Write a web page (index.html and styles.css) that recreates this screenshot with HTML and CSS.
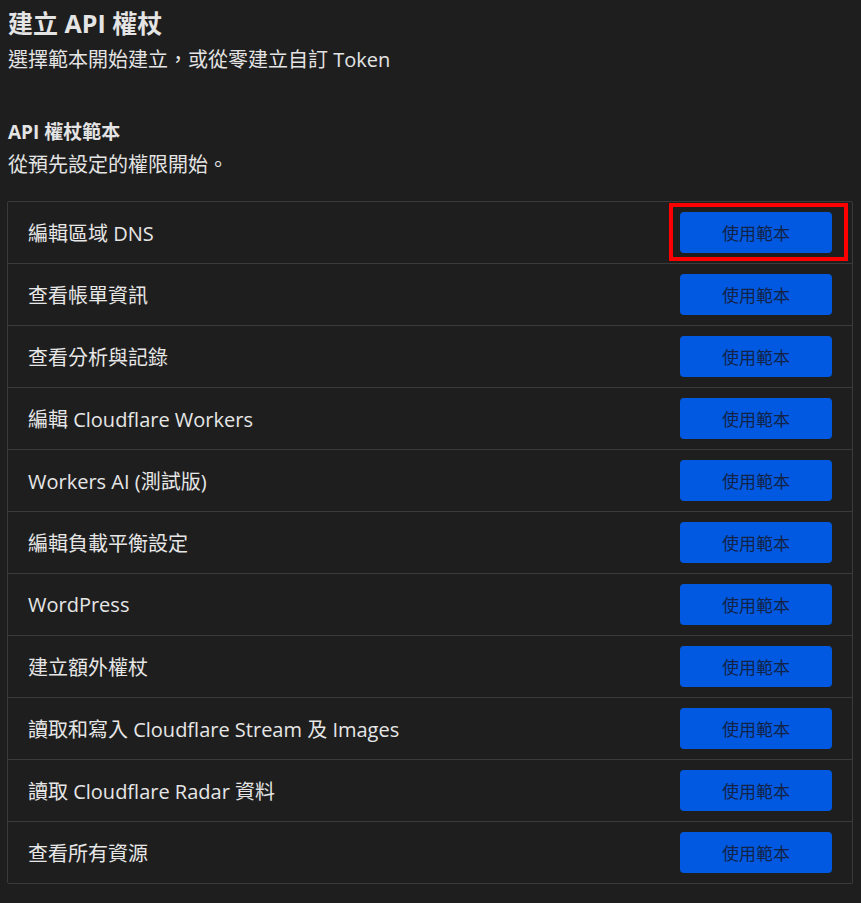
FILE: index.html
```html
<!DOCTYPE html>
<html lang="zh-Hant">
<head>
    <meta charset="UTF-8">
    <meta name="viewport" content="width=device-width, initial-scale=1.0">
    <title>建立 API 權杖</title>
    <link rel="stylesheet" href="styles.css">
</head>
<body>

<div class="page">
    <div class="page-header">
        <h1>建立 API 權杖</h1>
        <p>選擇範本開始建立，或從零建立自訂 Token</p>
    </div>

    <div class="section-header">
        <h2>API 權杖範本</h2>
        <p>從預先設定的權限開始。</p>
    </div>

    <div class="template-list">
        <div class="template-row">
            <span class="template-name">編輯區域 DNS</span>
            <span class="button-wrap highlighted">
                <button class="use-btn">使用範本</button>
            </span>
        </div>
        <div class="template-row">
            <span class="template-name">查看帳單資訊</span>
            <span class="button-wrap"><button class="use-btn">使用範本</button></span>
        </div>
        <div class="template-row">
            <span class="template-name">查看分析與記錄</span>
            <span class="button-wrap"><button class="use-btn">使用範本</button></span>
        </div>
        <div class="template-row">
            <span class="template-name">編輯 Cloudflare Workers</span>
            <span class="button-wrap"><button class="use-btn">使用範本</button></span>
        </div>
        <div class="template-row">
            <span class="template-name">Workers AI (測試版)</span>
            <span class="button-wrap"><button class="use-btn">使用範本</button></span>
        </div>
        <div class="template-row">
            <span class="template-name">編輯負載平衡設定</span>
            <span class="button-wrap"><button class="use-btn">使用範本</button></span>
        </div>
        <div class="template-row">
            <span class="template-name">WordPress</span>
            <span class="button-wrap"><button class="use-btn">使用範本</button></span>
        </div>
        <div class="template-row">
            <span class="template-name">建立額外權杖</span>
            <span class="button-wrap"><button class="use-btn">使用範本</button></span>
        </div>
        <div class="template-row">
            <span class="template-name">讀取和寫入 Cloudflare Stream 及 Images</span>
            <span class="button-wrap"><button class="use-btn">使用範本</button></span>
        </div>
        <div class="template-row">
            <span class="template-name">讀取 Cloudflare Radar 資料</span>
            <span class="button-wrap"><button class="use-btn">使用範本</button></span>
        </div>
        <div class="template-row">
            <span class="template-name">查看所有資源</span>
            <span class="button-wrap"><button class="use-btn">使用範本</button></span>
        </div>
    </div>
</div>

</body>
</html>
```

FILE: styles.css
```css
body {
    font-family: 'Open Sans', 'Noto Sans CJK TC', sans-serif;
    background-color: #1e1e1e;
    color: #e4e4e4;
    margin: 0;
    padding: 0;
}
.page {
    padding: 6px 8px 20px 7px;
}
.page-header h1 {
    font-size: 25px;
    font-weight: 700;
    margin: 0 0 0 1px;
    line-height: 34px;
}
.page-header p {
    font-size: 20px;
    margin: 5px 0 0 1px;
    line-height: 30px;
}
.section-header {
    margin-top: 43px;
}
.section-header h2 {
    font-size: 19px;
    font-weight: 700;
    margin: 0 0 0 1px;
    line-height: 28px;
}
.section-header p {
    font-size: 20px;
    margin: 5px 0 0 1px;
    line-height: 28px;
}
.template-list {
    margin-top: 22px;
    border: 1px solid #3a3a3a;
    border-radius: 2px;
}
.template-row {
    display: flex;
    justify-content: space-between;
    align-items: center;
    height: 61px;
    padding: 0 20px 0 20px;
    border-top: 1px solid #3a3a3a;
}
.template-row:first-child {
    border-top: none;
}
.template-name {
    font-size: 20px;
    color: #e6e6e6;
}
.button-wrap {
    position: relative;
    display: flex;
}
.button-wrap.highlighted::after {
    content: '';
    position: absolute;
    left: -11px;
    right: -16px;
    top: -9px;
    bottom: -8px;
    border: 4px solid #ff0000;
}
.use-btn {
    width: 152px;
    height: 41px;
    background-color: #0059e0;
    color: #132247;
    border: none;
    border-radius: 4px;
    font-family: 'Noto Sans CJK TC', sans-serif;
    font-size: 17px;
    cursor: pointer;
}
```
